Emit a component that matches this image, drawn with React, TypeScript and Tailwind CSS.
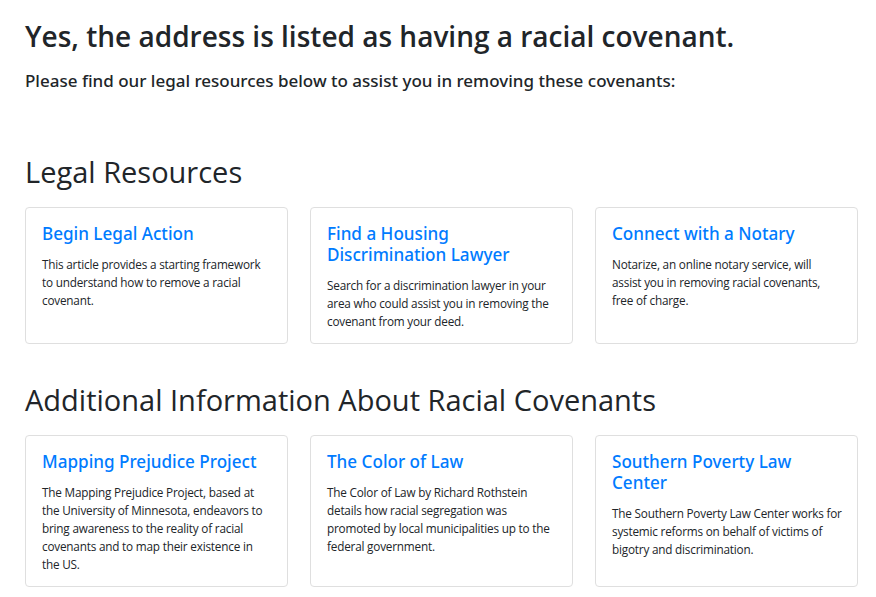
// card copy is kept as the lines the reference wraps into
const legal = [
  {
    title: "Begin Legal Action",
    lines: ["This article provides a starting framework", "to understand how to remove a racial", "covenant."],
  },
  {
    title: "Find a Housing Discrimination Lawyer",
    lines: [
      "Search for a discrimination lawyer in your",
      "area who could assist you in removing the",
      "covenant from your deed.",
    ],
  },
  {
    title: "Connect with a Notary",
    lines: ["Notarize, an online notary service, will", "assist you in removing racial covenants,", "free of charge."],
  },
];

const info = [
  {
    title: "Mapping Prejudice Project",
    lines: [
      "The Mapping Prejudice Project, based at",
      "the University of Minnesota, endeavors to",
      "bring awareness to the reality of racial",
      "covenants and to map their existence in",
      "the US.",
    ],
  },
  {
    title: "The Color of Law",
    lines: [
      "The Color of Law by Richard Rothstein",
      "details how racial segregation was",
      "promoted by local municipalities up to the",
      "federal government.",
    ],
  },
  {
    title: "Southern Poverty Law Center",
    lines: [
      "The Southern Poverty Law Center works for",
      "systemic reforms on behalf of victims of",
      "bigotry and discrimination.",
    ],
  },
];

function Card({ title, lines }: { title: string; lines: string[] }) {
  return (
    <div className="border border-[#dfdfdf] rounded-[4px] bg-white px-4 pt-[14.5px] pb-[13.5px]">
      <a
        href="#"
        className="block text-[17.1px] leading-[21px] font-medium text-[#007bff] font-['Noto_Sans',sans-serif]"
      >
        {title}
      </a>
      <p className="mt-[11px] text-[11.75px] leading-[18px] tracking-[-0.2px] text-[#212529]">
        {lines.map((l) => (
          <span key={l} className="block whitespace-nowrap">
            {l}
          </span>
        ))}
      </p>
    </div>
  );
}

export default function App() {
  return (
    <div className="min-h-screen bg-white text-[#212529] pl-[25px] pr-[18px] pt-[19px] font-['Open_Sans','Noto_Sans',sans-serif]">
      <h1 className="text-[28px] leading-[34px] font-semibold">
        Yes, the address is listed as having a racial covenant.
      </h1>
      <p className="mt-[16px] text-[17px] leading-[24px] font-medium font-['Noto_Sans',sans-serif]">
        Please find our legal resources below to assist you in removing these covenants:
      </p>

      <h2 className="mt-[60.5px] text-[29px] leading-[36px]">Legal Resources</h2>
      <div className="mt-[17.5px] grid grid-cols-3 gap-[22px]">
        {legal.map((c) => (
          <Card key={c.title} {...c} />
        ))}
      </div>

      <h2 className="mt-[37.5px] text-[29px] leading-[36px]">
        Additional Information About Racial Covenants
      </h2>
      <div className="mt-[17.5px] grid grid-cols-3 gap-[22px]">
        {info.map((c) => (
          <Card key={c.title} {...c} />
        ))}
      </div>
    </div>
  );
}
